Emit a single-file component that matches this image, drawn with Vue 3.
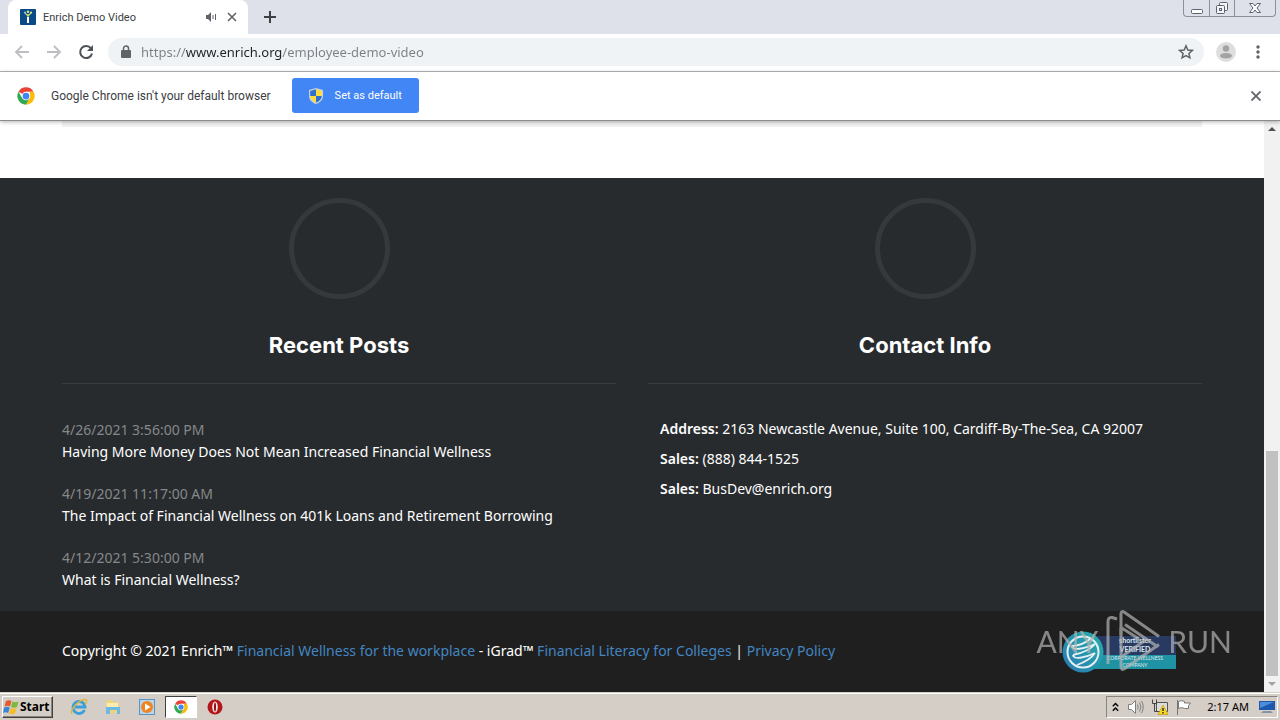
<template>
  <div class="desktop">
    <!-- tab strip -->
    <header class="tab-strip">
      <div class="tab">
        <svg class="favicon" width="16" height="16" viewBox="0 0 16 16">
          <rect width="16" height="16" rx="1" fill="#0b4a86" />
          <path d="M7 8h2v6H7z" fill="#fff" />
          <path d="M8 8V5M8 7L5 4M8 7l3-3" stroke="#b7d36b" stroke-width="1.200" />
          <circle cx="8" cy="2.800" r="1.200" fill="#d9e58e" />
          <circle cx="5" cy="3.600" r="1.100" fill="#7fc4e8" />
          <circle cx="11" cy="3.600" r="1.100" fill="#d9e58e" />
        </svg>
        <span class="tab-title">Enrich Demo Video</span>
        <button class="icon-btn" aria-label="Mute tab">
          <svg width="12" height="12" viewBox="0 0 12 12">
            <path d="M1 4h2l3-3v10L3 8H1z" fill="#5f6368" />
            <path d="M8 4v4M10.500 3v6" stroke="#5f6368" />
          </svg>
        </button>
        <button class="icon-btn tab-close" aria-label="Close tab">
          <svg width="10" height="10" viewBox="0 0 10 10">
            <path d="M1 1l8 8M9 1L1 9" stroke="#5f6368" stroke-width="1.600" />
          </svg>
        </button>
      </div>
      <button class="icon-btn new-tab" aria-label="New tab">
        <svg width="12" height="12" viewBox="0 0 12 12">
          <path d="M6 0v12M0 6h12" stroke="#3c4043" stroke-width="2" />
        </svg>
      </button>
      <div class="window-buttons">
        <button class="win-btn" aria-label="Minimize">
          <svg width="14" height="14" viewBox="0 0 14 14">
            <rect x="1.500" y="8.500" width="11" height="4" rx="1" fill="#fff" stroke="#5a6270" />
          </svg>
        </button>
        <button class="win-btn" aria-label="Restore">
          <svg width="14" height="14" viewBox="0 0 14 14" fill="#f4f5f7" stroke="#5a6270">
            <rect x="4.500" y="1.500" width="8" height="8" rx="1" />
            <rect x="1.500" y="4.500" width="8" height="8" rx="1" />
            <rect x="4.500" y="7.500" width="2" height="2" />
          </svg>
        </button>
        <button class="win-btn wide" aria-label="Close">
          <svg width="14" height="14" viewBox="0 0 14 14">
            <path
              d="M1.500 2.500h3.500l2 2.500 2-2.500h3.500L9 7l3.500 4.500H9L7 9l-2 2.500H1.500L5 7z"
              fill="#fff"
              stroke="#5a6270"
            />
          </svg>
        </button>
      </div>
    </header>

    <!-- toolbar -->
    <nav class="toolbar">
      <button class="icon-btn" aria-label="Back">
        <svg width="16" height="16" viewBox="0 0 16 16" fill="none" stroke="#bcbec1" stroke-width="1.800">
          <path d="M15 8H2M8 2L2 8l6 6" />
        </svg>
      </button>
      <button class="icon-btn" aria-label="Forward">
        <svg width="16" height="16" viewBox="0 0 16 16" fill="none" stroke="#bcbec1" stroke-width="1.800">
          <path d="M1 8h13M8 2l6 6-6 6" />
        </svg>
      </button>
      <button class="icon-btn" aria-label="Reload">
        <svg width="16" height="16" viewBox="0 0 16 16">
          <path d="M13 4.500A6 6 0 1 0 14 9.500" fill="none" stroke="#4d5156" stroke-width="2" />
          <path d="M15 1v6H9z" fill="#4d5156" />
        </svg>
      </button>
      <div class="omnibox">
        <svg width="10" height="14" viewBox="0 0 10 14">
          <path d="M2.500 6V3.500a2.500 2.500 0 0 1 5 0V6" fill="none" stroke="#5f6368" stroke-width="1.500" />
          <rect y="5" width="10" height="8" rx="1" fill="#5f6368" />
        </svg>
        <input v-model="url" class="url" type="text" aria-label="Address" spellcheck="false" />
        <button class="icon-btn" aria-label="Bookmark this page">
          <svg width="16" height="16" viewBox="0 0 16 16">
            <path
              d="M8 1.800l1.800 4.200 4.500.4-3.400 3 1 4.400L8 11.500l-3.900 2.300 1-4.400-3.400-3 4.500-.4z"
              fill="none"
              stroke="#5f6368"
              stroke-width="1.500"
            />
          </svg>
        </button>
      </div>
      <button class="icon-btn" aria-label="Profile">
        <svg width="20" height="20" viewBox="0 0 20 20">
          <circle cx="10" cy="10" r="10" fill="#dedede" />
          <circle cx="10" cy="6.500" r="3.200" fill="#a3a3a3" />
          <ellipse cx="10" cy="13.800" rx="6" ry="2.800" fill="#a3a3a3" />
        </svg>
      </button>
      <button class="icon-btn menu-btn" aria-label="Menu">
        <svg width="4" height="14" viewBox="0 0 4 14" fill="#5f6368">
          <circle cx="2" cy="2" r="1.700" />
          <circle cx="2" cy="7" r="1.700" />
          <circle cx="2" cy="12" r="1.700" />
        </svg>
      </button>
    </nav>

    <!-- default browser bar -->
    <section v-if="infobarOpen" class="infobar">
      <svg width="18" height="18" viewBox="0 0 48 48">
        <path d="M24 24L4.080 12.500A23 23 0 0 1 43.920 12.500H24z" fill="#ea4335" />
        <path d="M24 24l10 5.750L24 47A23 23 0 0 1 4.080 12.500l10 17.250z" fill="#34a853" />
        <path d="M43.920 12.500A23 23 0 0 1 24 47l10-17.250V12.500z" fill="#fbbc05" />
        <circle cx="24" cy="24" r="11.500" fill="#fff" />
        <circle cx="24" cy="24" r="9" fill="#4285f4" />
      </svg>
      <span class="infobar-text">Google Chrome isn't your default browser</span>
      <button class="default-btn">
        <svg width="14" height="16" viewBox="0 0 14 16">
          <path d="M7 0L0 2v6c0 4 3 6.500 7 8 4-1.500 7-4 7-8V2z" fill="#c9d3dc" />
          <path d="M7 1.200L1.200 3v5H7z" fill="#2f6fd0" />
          <path d="M7 1.200L12.800 3v5H7z" fill="#ffdc3c" />
          <path d="M7 8H1.200c0 3 2.500 5.300 5.800 6.700z" fill="#ffdc3c" />
          <path d="M7 8h5.800c0 3-2.500 5.300-5.800 6.700z" fill="#2f6fd0" />
        </svg>
        <span>Set as default</span>
      </button>
      <button class="icon-btn infobar-close" aria-label="Dismiss" @click="infobarOpen = false">
        <svg width="10" height="10" viewBox="0 0 10 10">
          <path d="M0.500 0.500l9 9M9.500 0.500l-9 9" stroke="#5f6368" stroke-width="1.800" />
        </svg>
      </button>
    </section>

    <!-- web page -->
    <div class="viewport">
      <main class="page">
        <div class="page-top">
          <div class="strip"></div>
        </div>
        <div class="footer-main">
          <div class="container columns">
            <section>
              <div class="circle"></div>
              <h3>Recent Posts</h3>
              <ul class="posts">
                <li v-for="post in posts" :key="post.date">
                  <time>{{ post.date }}</time>
                  <a href="#">{{ post.title }}</a>
                </li>
              </ul>
            </section>
            <section>
              <div class="circle"></div>
              <h3>Contact Info</h3>
              <div class="contact">
                <p v-for="row in contacts" :key="row.value">
                  <b>{{ row.label }}</b> {{ row.value }}
                </p>
              </div>
            </section>
          </div>
        </div>
        <footer class="footer-bottom">
          <p class="container">
            Copyright © 2021 Enrich™ <a href="#">Financial Wellness for the workplace</a> - iGrad™
            <a href="#">Financial Literacy for Colleges</a> | <a href="#">Privacy Policy</a>
          </p>
        </footer>

        <!-- shortlister badge -->
        <div class="badge">
          <svg class="badge-seal" width="42" height="42" viewBox="0 0 42 42">
            <defs>
              <linearGradient id="seal" x1="1" y1="0" x2="0" y2="1">
                <stop offset="0" stop-color="#25b0a8" />
                <stop offset="1" stop-color="#2a78b4" />
              </linearGradient>
            </defs>
            <circle cx="21" cy="21" r="20.500" fill="url(#seal)" />
            <circle cx="21" cy="21" r="15.500" fill="none" stroke="#e4f1f4" stroke-width="2" />
            <path
              d="M10 15c6 0 12-2 18-7M10 15c0 5 12 3 23-2M33 13c-4 5-12 9-22 11M11 24c0 5 12 3 22-2M33 22c-4 6-10 9-18 12"
              fill="none"
              stroke="#e4f1f4"
              stroke-width="1.800"
            />
          </svg>
          <div class="badge-body">
            <div class="badge-name">shortlister<br />VERIFIED</div>
            <div class="badge-sub">CORPORATE WELLNESS<br />COMPANY</div>
          </div>
        </div>
        <div class="watermark">
          <span>ANY</span>
          <svg width="56" height="62" viewBox="0 0 56 62" fill="none" stroke="#b4b4b4" stroke-width="3" stroke-linejoin="round">
            <path d="M12 9L7 7.500C4 7 3 9 3 12v42" />
            <path d="M16 25V4c0-2 1-3 3-2L54 26.500" />
            <path d="M16 17.500L34 29M16 17.500V56c0 3 1 4 3 3L54 34.500M16 47L40 30.500" />
            <path d="M20 14.500L53 37" />
          </svg>
          <span>RUN</span>
        </div>
      </main>
      <div class="scrollbar">
        <svg width="8" height="16" viewBox="0 0 8 16"><path d="M0 10l4-4 4 4z" fill="#505050" /></svg>
        <div class="thumb"></div>
        <svg width="8" height="16" viewBox="0 0 8 16"><path d="M0 6l4 4 4-4z" fill="#a3a3a3" /></svg>
      </div>
    </div>

    <!-- taskbar -->
    <div class="taskbar">
      <button class="start-btn">
        <svg width="17" height="16" viewBox="0 0 17 16">
          <path d="M3 2c2-1 4-1 5.500 0L7 7.500C5 6.500 3.500 6.500 1.500 7.500z" fill="#e8592b" />
          <path d="M9.500 2.500c2 1 4 1 6 0L14 8c-2 1-4 1-6 0z" fill="#7db83a" />
          <path d="M1.200 8.500c2-1 4-1 5.500 0L5.200 14c-1.700-1-3.500-1-5.200 0z" fill="#3c84d6" />
          <path d="M7.600 9c2 1 4 1 6 0l-1.500 5.500c-2 1-4 1-6 0z" fill="#f6bd2a" />
        </svg>
        Start
      </button>
      <div class="launchers">
        <button class="launcher" aria-label="Internet Explorer">
          <svg width="18" height="18" viewBox="0 0 18 18" fill="none">
            <path d="M14.500 12a6 6 0 1 1 .5-3H5" stroke="#3a9fdb" stroke-width="2.800" />
            <path d="M2 16C-1 12 9 2 15 1.500c3 0 1.500 3.500 0 5" stroke="#dfb63c" stroke-width="1.400" />
          </svg>
        </button>
        <button class="launcher" aria-label="Explorer">
          <svg width="16" height="16" viewBox="0 0 16 16">
            <path d="M1 2l5-1 2 2h6v11H1z" fill="#f0d47a" />
            <path d="M2 4h11v6H2z" fill="#fbedb2" />
            <path d="M1 8h14v7h-3v-4H5v4H1z" fill="#6cb9e2" />
          </svg>
        </button>
        <button class="launcher" aria-label="Media Player">
          <svg width="16" height="16" viewBox="0 0 16 16">
            <rect x=".5" y=".5" width="15" height="15" fill="#b6d6ef" stroke="#5b93c2" />
            <circle cx="8" cy="8" r="6" fill="#ee8522" />
            <path d="M6 4.500l5.500 3.500L6 11.500z" fill="#fff" />
          </svg>
        </button>
        <button class="launcher active" aria-label="Google Chrome">
          <svg width="14" height="14" viewBox="0 0 48 48">
            <path d="M24 24L4.080 12.500A23 23 0 0 1 43.920 12.500H24z" fill="#ea4335" />
            <path d="M24 24l10 5.750L24 47A23 23 0 0 1 4.080 12.500l10 17.250z" fill="#34a853" />
            <path d="M43.920 12.500A23 23 0 0 1 24 47l10-17.250V12.500z" fill="#fbbc05" />
            <circle cx="24" cy="24" r="11.500" fill="#fff" />
            <circle cx="24" cy="24" r="9" fill="#4285f4" />
          </svg>
        </button>
        <button class="launcher" aria-label="Opera">
          <svg width="16" height="16" viewBox="0 0 16 16">
            <circle cx="8" cy="8" r="7.500" fill="#b3151b" />
            <ellipse cx="8" cy="8" rx="2.800" ry="5.500" fill="#f5e3e3" />
            <ellipse cx="8" cy="8" rx="1" ry="4.500" fill="#8d0d12" />
          </svg>
        </button>
      </div>
      <div class="tray">
        <svg width="7" height="10" viewBox="0 0 7 10" fill="none" stroke="#000" stroke-width="1.400">
          <path d="M.8 4.200l2.700-2.700 2.700 2.700M.8 8.700L3.500 6l2.700 2.700" />
        </svg>
        <svg class="tray-sound" width="17" height="16" viewBox="0 0 17 16" fill="none" stroke="#808080">
          <path d="M1.500 5.500h3l4-4v13l-4-4h-3z" fill="#fff" />
          <path d="M10.500 5.500q1.500 2.500 0 5M12.500 3.500q3 4.500 0 9M14.500 2q3.500 6 0 12" />
        </svg>
        <svg width="16" height="16" viewBox="0 0 16 16">
          <path d="M4.500 3.500h11v9h-11z" fill="#dcdcdc" stroke="#555" />
          <path d="M.5.500v4h4v-4M2.500 4.500v8h4" fill="none" stroke="#444" />
          <path d="M11 6l5 9.500H6z" fill="#ffd91f" stroke="#b59100" stroke-width=".6" />
          <path d="M11 9v3M11 13v1.400" stroke="#222" stroke-width="1.400" />
        </svg>
        <svg width="16" height="16" viewBox="0 0 16 16" stroke="#777">
          <path d="M2.500 2.500c2-1 4-1 6 0v1.500h6l-2 2.500 0 3h-4c-2-1-4-1-6 0z" fill="#fff" />
          <path d="M1.500 1v15" fill="none" />
        </svg>
        <time class="clock">2:17 AM</time>
        <svg width="16" height="14" viewBox="0 0 16 14">
          <path d="M0 1h16v9H0z" fill="#1e58ad" />
          <path d="M1 2h14L1 8z" fill="#4d8ddc" />
          <path d="M4 11h8l2 2H2z" fill="#8794a5" />
        </svg>
      </div>
    </div>
  </div>
</template>

<script setup>
import { ref } from 'vue'

const url = ref('https://www.enrich.org/employee-demo-video')
const infobarOpen = ref(true)

const posts = [
  { date: '4/26/2021 3:56:00 PM', title: 'Having More Money Does Not Mean Increased Financial Wellness' },
  { date: '4/19/2021 11:17:00 AM', title: 'The Impact of Financial Wellness on 401k Loans and Retirement Borrowing' },
  { date: '4/12/2021 5:30:00 PM', title: 'What is Financial Wellness?' }
]

const contacts = [
  { label: 'Address:', value: '2163 Newcastle Avenue, Suite 100, Cardiff-By-The-Sea, CA 92007' },
  { label: 'Sales:', value: '(888) 844-1525' },
  { label: 'Sales:', value: 'BusDev@enrich.org' }
]
</script>

<style>
body {
  margin: 0;
}
</style>

<style scoped>
.desktop {
  height: 100vh;
  display: flex;
  flex-direction: column;
  overflow: hidden;
  font-family: Roboto, "Noto Sans", sans-serif;
  background: #fff;
}

button {
  font-family: inherit;
  border: none;
  padding: 0;
  background: none;
}

svg {
  display: block;
  flex: none;
}

.icon-btn {
  display: flex;
  align-items: center;
  justify-content: center;
}

/* tab strip */
.tab-strip {
  display: flex;
  height: 34px;
  flex: none;
  padding-left: 8px;
  background: #dee1e9;
}

.tab {
  display: flex;
  align-items: center;
  width: 240px;
  box-sizing: border-box;
  padding: 0 11px 0 12px;
  background: #fff;
  border-radius: 8px 8px 0 0;
}

.tab-title {
  flex: 1;
  margin-left: 7px;
  font-size: 11px;
  color: #3c4043;
}

.tab-close {
  margin-left: 10px;
}

.new-tab {
  margin-left: 16px;
}

.window-buttons {
  display: flex;
  height: 17px;
  margin-left: auto;
  margin-right: 4px;
  box-sizing: border-box;
  border: 1px solid #8a909c;
  border-top: none;
  border-radius: 0 0 4px 4px;
}

.win-btn {
  display: flex;
  align-items: center;
  justify-content: center;
  width: 25px;
}

.win-btn + .win-btn {
  border-left: 1px solid #8a909c;
}

.win-btn.wide {
  width: 41px;
}

/* toolbar */
.toolbar {
  display: flex;
  align-items: center;
  gap: 16px;
  height: 35px;
  flex: none;
  padding: 0 20px 2px 14px;
  border-bottom: 1px solid #b4b6b9;
}

.omnibox {
  display: flex;
  align-items: center;
  flex: 1;
  height: 28px;
  margin: 0 -4px 0 -2px;
  padding: 0 10px 0 13px;
  border-radius: 14px;
  background: #f0f3f6;
}

.url {
  flex: 1;
  min-width: 0;
  margin-left: 10px;
  padding: 0;
  border: none;
  outline: none;
  font-family: "Noto Sans", sans-serif;
  font-size: 13px;
  color: transparent;
  background: linear-gradient(90deg, #7b7f84 45px, #202124 45px, #202124 141px, #7b7f84 141px);
  -webkit-background-clip: text;
  background-clip: text;
}

.menu-btn {
  margin-left: 4px;
}

/* infobar */
.infobar {
  display: flex;
  align-items: center;
  height: 47px;
  flex: none;
  padding: 0 19px 1px 17px;
  border-bottom: 1px solid #8c8c8c;
  box-shadow: 0 1px 4px rgba(0, 0, 0, 0.3);
  position: relative;
  z-index: 1;
  background: #fff;
}

.infobar-text {
  margin: 0 21px 0 16px;
  font-size: 12px;
  color: #3c4043;
}

.default-btn {
  display: flex;
  align-items: center;
  gap: 12px;
  height: 35px;
  padding: 0 17px;
  border-radius: 3px;
  background: #4285f4;
  color: #fff;
  font-size: 11px;
}

.infobar-close {
  margin-left: auto;
}

/* page */
.viewport {
  display: flex;
  flex: 1;
  min-height: 0;
}

.page {
  position: relative;
  display: flex;
  flex-direction: column;
  flex: 1;
  font-family: "Noto Sans", sans-serif;
  font-size: 14px;
  color: #fff;
}

.container {
  width: 1140px;
  max-width: 96%;
  margin: 0 auto;
}

.page-top {
  height: 57px;
  flex: none;
}

.strip {
  width: 1140px;
  max-width: 96%;
  height: 6px;
  margin: 0 auto;
  background: #f1f1f1;
}

.footer-main {
  height: 433px;
  flex: none;
  background: #272b2e;
}

.columns {
  display: grid;
  grid-template-columns: 1fr 1fr;
  gap: 32px;
}

.circle {
  width: 91px;
  height: 91px;
  margin: 20px auto 0;
  border: 5px solid #36393c;
  border-radius: 50%;
}

h3 {
  margin: 0;
  padding: 32px 0 23px;
  border-bottom: 1px solid #393d40;
  font-family: Inter, sans-serif;
  font-size: 22px;
  line-height: 29px;
  text-align: center;
}

.posts {
  margin: 35px 0 0;
  padding: 0;
  list-style: none;
}

.posts li {
  margin-bottom: 20px;
  line-height: 22px;
}

.posts time {
  display: block;
  color: #85888a;
}

.posts a {
  color: #fff;
  text-decoration: none;
}

.contact {
  padding: 30px 12px 0;
  line-height: 30px;
}

.contact p {
  margin: 0;
}

.contact b {
  font-weight: 600;
}

.footer-bottom {
  flex: 1;
  background: #1f1f1f;
}

.footer-bottom p {
  padding-top: 30px;
  line-height: 20px;
}

.footer-bottom a {
  color: #4386c2;
  text-decoration: none;
}

/* badge and watermark float over the page */
.badge {
  position: absolute;
  right: 88px;
  bottom: 19px;
  display: flex;
  align-items: center;
}

.badge-seal {
  position: relative;
  z-index: 1;
}

.badge-body {
  width: 92px;
  margin-left: -20px;
  text-align: center;
  color: #dfe9ee;
}

.badge-name {
  padding: 0 0 1px 10px;
  background: #283a61;
  font-family: Lato, sans-serif;
  font-size: 7px;
  line-height: 9px;
  font-weight: 700;
}

.badge-sub {
  padding-left: 10px;
  background: #1f93a4;
  font-family: Lato, sans-serif;
  font-size: 5px;
  line-height: 7px;
}

.watermark {
  position: absolute;
  right: 32px;
  bottom: 20px;
  z-index: 2;
  display: flex;
  align-items: center;
  gap: 7px;
  font-family: Lato, sans-serif;
  font-size: 30px;
  color: #b4b4b4;
  opacity: 0.7;
}

.scrollbar {
  display: flex;
  flex-direction: column;
  align-items: center;
  width: 16px;
  background: #f1f1f1;
}

.thumb {
  width: 12px;
  height: 225px;
  margin-top: auto;
  background: #c1c1c1;
}

/* taskbar */
.taskbar {
  display: flex;
  align-items: center;
  height: 27px;
  flex: none;
  padding: 0 2px;
  border-top: 1px solid #d6d2ca;
  box-shadow: inset 0 1px #fff;
  background: #d5cec6;
}

.start-btn {
  display: flex;
  align-items: center;
  height: 22px;
  padding: 0 2px 0 0;
  border: 1px solid;
  border-color: #fff #404040 #404040 #fff;
  box-shadow: inset -1px -1px #8a857c;
  font-family: "Noto Sans", sans-serif;
  font-size: 12px;
  font-weight: 700;
}

.launchers {
  display: flex;
  gap: 2px;
  margin-left: 10px;
}

.launcher {
  display: flex;
  align-items: center;
  justify-content: center;
  width: 32px;
  height: 22px;
}

.launcher.active {
  border: 1px solid;
  border-color: #404040 #fff #fff #404040;
  box-sizing: border-box;
  background: #fff;
}

.tray {
  display: flex;
  align-items: center;
  gap: 8px;
  height: 20px;
  margin-left: auto;
  padding: 0 2px 0 5px;
  border: 1px solid;
  border-color: #8a857c #fff #fff #8a857c;
}

.clock {
  margin: 0 2px 0 7px;
  font-family: "Noto Sans", sans-serif;
  font-size: 11px;
}
</style>
